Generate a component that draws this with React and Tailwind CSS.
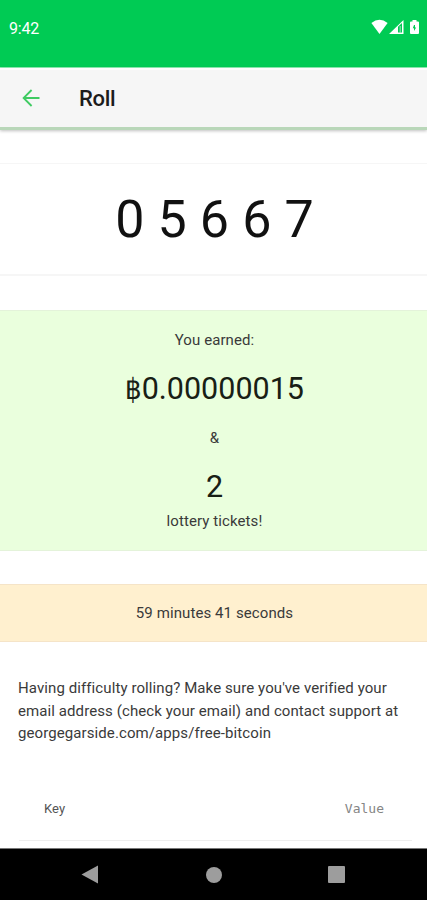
import React from 'react';

const StatusBar = () => (
  <div className="h-[68px] shrink-0 bg-[#00cb54] border-b border-[#8ff0b4] flex items-start justify-between pl-[9px] pr-[6px] pt-[18px] text-white">
    <span className="mt-px text-[16px] leading-5 tracking-[-0.2px]">9:42</span>
    <svg width="50" height="18" viewBox="0 0 50 18" fill="currentColor">
      {/* wifi */}
      <path d="M0.4 5Q8.5 -1.4 16.6 5L8.5 16Z" />
      {/* signal */}
      <path d="M18 16L32.5 2V16Z M27 8.8V14.4H31V5Z" fillRule="evenodd" />
      <path d="M28.6 8H29.8V14.4H28.6Z" opacity="0.5" />
      {/* battery */}
      <path
        d="M41.5 2H45.5V3.5H47Q48 3.5 48 4.5V15Q48 16 47 16H40Q39 16 39 15V4.5Q39 3.5 40 3.5H41.5Z M43 7L41.8 10.2H43V13L45.2 9.6H44V7Z"
        fillRule="evenodd"
      />
    </svg>
  </div>
);

const Header = () => (
  <header className="h-[62px] shrink-0 bg-[#f6f6f6] border-t-2 border-b-3 border-t-[#fdfdfd] border-b-[#b9d7b9] shadow-[0_1px_3px_rgba(0,0,0,0.25)] flex items-center pl-[22px] pb-[2px]">
    <svg width="18" height="18" viewBox="0 0 18 18" fill="none" stroke="#3fcb62" strokeWidth="1.8">
      <path d="M17.5 9H1.8M9.6 1L1.6 9L9.6 17" />
    </svg>
    <h1 className="ml-[39px] pt-[2px] text-[22px] leading-7 font-medium tracking-[-0.3px] text-[#1c1c1c]">Roll</h1>
  </header>
);

const NavBar = () => (
  <nav className="h-[52px] shrink-0 bg-black border-t border-[#777777] text-[#9d9d9d] flex items-center">
    <svg className="ml-[81px]" width="17" height="19" viewBox="0 0 17 19" fill="currentColor">
      <path d="M0.5 9.5L17 0.5V18.5Z" />
    </svg>
    <div className="ml-[108px] size-[16px] rounded-full bg-[#9d9d9d]" />
    <div className="ml-[106px] size-[17px] rounded-[1px] bg-[#9d9d9d]" />
  </nav>
);

const App = () => {
  return (
    <div className="w-full h-[900px] overflow-hidden flex flex-col bg-white text-[#3a3a3a] font-['Roboto',sans-serif] text-[15px] tracking-[0.09px]">
      <StatusBar />
      <Header />
      <main className="flex-1 min-h-0 overflow-hidden">
        <div className="mt-[33px] h-[113px] pt-[2px] pl-[2px] border-t border-b-2 border-[#f6f6f6] flex items-center justify-center">
          <span className="text-[52px] leading-none text-[#111111]">0 5 6 6 7</span>
        </div>

        <div className="mt-[34px] h-[241px] bg-[#eaffdd] border-y border-[#e4f3da] flex flex-col items-center pt-[17px] pl-[2px]">
          <p className="leading-6">You earned:</p>
          <p className="mt-[19px] h-9 text-[30.5px] leading-9 tracking-normal text-[#182015]">
            <span className="font-['DejaVu_Sans_Condensed','DejaVu_Sans',sans-serif] text-[29px]">฿</span>0.00000015
          </p>
          <p className="mt-[19px] leading-6">&amp;</p>
          <p className="mt-[19px] text-[30.5px] leading-9 text-[#182015]">2</p>
          <p className="mt-[4px] leading-6">lottery tickets!</p>
        </div>

        <div className="mt-[33px] h-[58px] pl-[2px] bg-[#fff0cf] border-y border-[#f5e4c8] flex items-center justify-center">
          59 minutes 41 seconds
        </div>

        <p className="mt-[35px] pl-[18px] leading-[22.5px]">
          Having difficulty rolling? Make sure you've verified your
          <br />
          email address (check your email) and contact support at
          <br />
          georgegarside.com/apps/free-bitcoin
        </p>

        <div className="ml-[19px] mr-[15px] mt-[53px] h-[43px] pl-[25px] pr-[28px] border-b border-[#eeeeee] flex justify-between text-[13px] leading-5">
          <span className="mt-px text-[#555555]">Key</span>
          <span className="mt-px text-[#858585] tracking-normal font-['DejaVu_Sans_Mono',monospace]">Value</span>
        </div>
      </main>
      <NavBar />
    </div>
  );
};

export default App;
